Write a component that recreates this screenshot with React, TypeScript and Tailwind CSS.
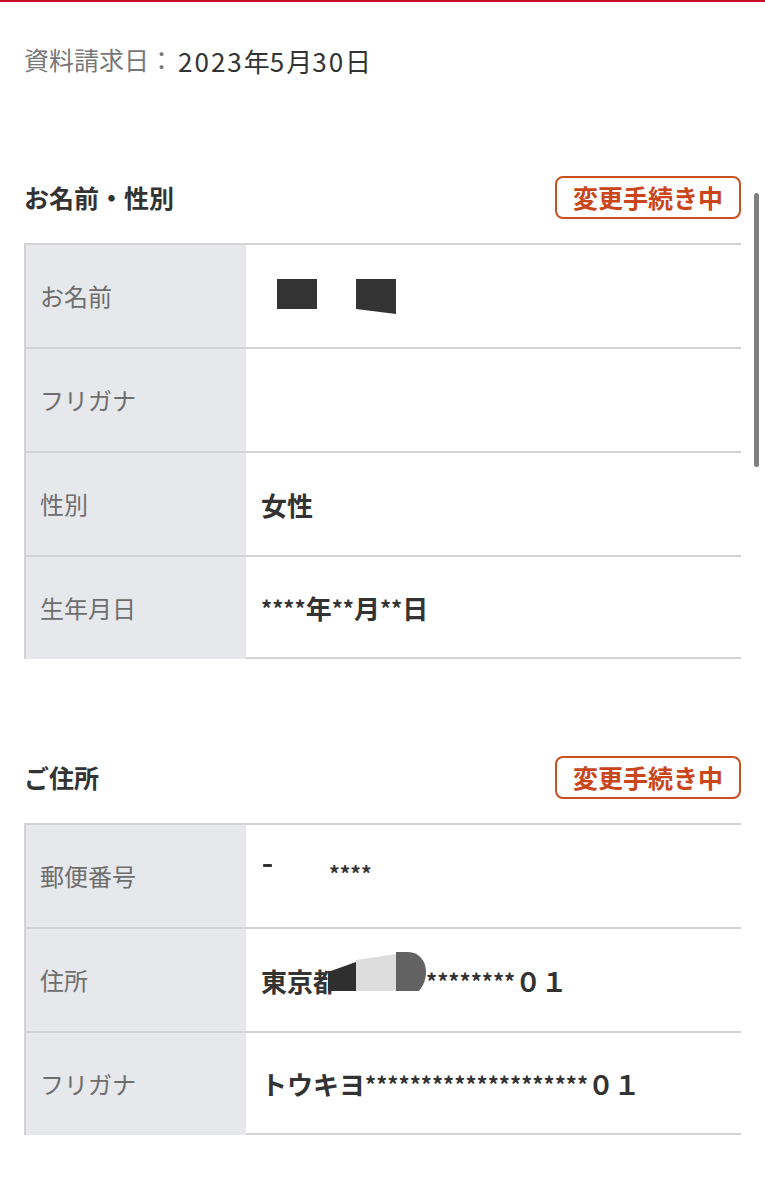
import React from "react";

interface RowProps {
  label: string;
  last?: boolean;
  children?: React.ReactNode;
}

const Row = ({ label, last, children }: RowProps) => (
  <div className="flex h-[104px] border-t-2 border-[#d3d3d3]">
    <div className="w-[222px] shrink-0 bg-[#e7e8eb] border-l-2 border-[#d3d3d3] flex items-center pl-[14px] text-[24px] text-[#6e6e6e]">
      {label}
    </div>
    <div
      className={`flex-1 flex items-center pl-[15px] text-[26px] font-bold text-[#333] ${
        last ? "border-b-2 border-[#d3d3d3]" : ""
      }`}
    >
      {children}
    </div>
  </div>
);

// masked characters are drawn a little smaller than the kana/kanji around them
const Stars = ({ n }: { n: number }) => <span className="text-[22px]">{"*".repeat(n)}</span>;

const Badge = () => (
  <div className="w-[186px] h-[43px] border-2 border-[#c9501f] rounded-[8px] flex items-center justify-center text-[25px] font-bold text-[#c8461a]">
    変更手続き中
  </div>
);

const SectionHead = ({ title }: { title: string }) => (
  <div className="flex items-center justify-between h-[43px]">
    <h2 className="text-[25px] font-bold text-[#333]">{title}</h2>
    <Badge />
  </div>
);

const NameMask = () => (
  <svg width="140" height="40" viewBox="0 0 140 40">
    <rect x="16" y="3" width="40" height="30" fill="#333" />
    <polygon points="95,3 135,3 135,38 95,33" fill="#333" />
  </svg>
);

const AddressMask = () => (
  <svg width="98" height="40" viewBox="0 0 98 40" className="-ml-[11px] mb-[18px] shrink-0">
    <polygon points="0,21 28,11 28,40 0,40" fill="#2f2f2f" />
    <polygon points="28,9 68,3 68,40 28,40" fill="#dddddd" />
    <path d="M68 1 H80 C91 1 98 10 98 21 C98 29 95 35 91 40 H68 Z" fill="#626262" />
  </svg>
);

const App = () => {
  return (
    <div className="relative w-[765px] min-h-[1200px] bg-white font-['Noto_Sans_CJK_JP','Noto_Sans',sans-serif]">
      <div className="h-[2px] bg-[#c8102e]" />
      <div className="px-[24px]">
        <p className="mt-[42px] h-[32px] flex items-center text-[25px]">
          <span className="text-[#777]">資料請求日：</span>
          <span className="ml-[4px] text-[26px] text-[#333]">
            <span className="tracking-[2px]">2023</span>年<span className="tracking-[2px]">5</span>月
            <span className="tracking-[2px]">30</span>日
          </span>
        </p>

        <section className="mt-[100px]">
          <SectionHead title="お名前・性別" />
          <div className="mt-[24px]">
            <Row label="お名前">
              <NameMask />
            </Row>
            <Row label="フリガナ" />
            <Row label="性別">女性</Row>
            <Row label="生年月日" last>
              <Stars n={4} />年<Stars n={2} />月<Stars n={2} />日
            </Row>
          </div>
        </section>

        <section className="mt-[97px]">
          <SectionHead title="ご住所" />
          <div className="mt-[24px]">
            <Row label="郵便番号">
              <span className="ml-[2px] mb-[22px] w-[9px] h-[3px] rounded-[1px] bg-[#333]" />
              <span className="ml-[57px] mb-[4px] text-[21px]">****</span>
            </Row>
            <Row label="住所">
              <span>東京都</span>
              <AddressMask />
              <Stars n={8} />
              <span>０１</span>
            </Row>
            <Row label="フリガナ" last>
              トウキヨ<Stars n={20} />０１
            </Row>
          </div>
        </section>
      </div>
      <div className="absolute right-[6px] top-[193px] w-[5px] h-[274px] rounded-full bg-[#7f7f7f]" />
    </div>
  );
};

export default App;
